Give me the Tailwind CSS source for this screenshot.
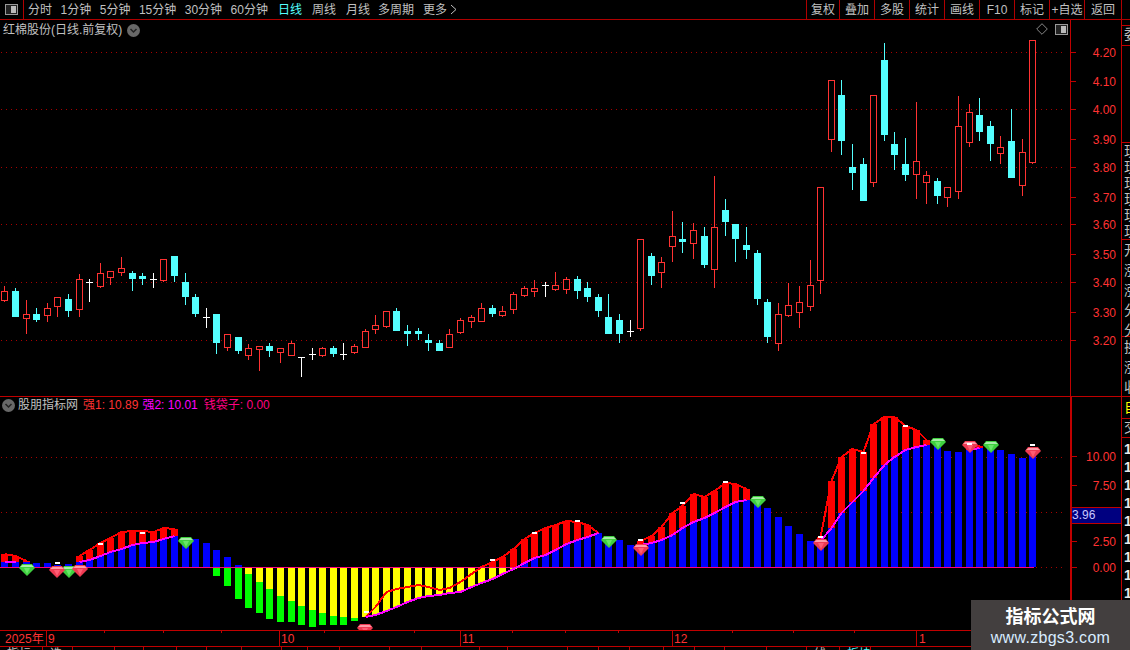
<!DOCTYPE html>
<html lang="en">
<head>
  <meta charset="UTF-8" />
  <title>红棉股份 K线</title>
  <script src="https://cdn.jsdelivr.net/npm/@tailwindcss/browser@4"></script>
</head>
<body class="relative w-[1130px] h-[650px] overflow-hidden bg-black text-[12px] leading-[14px] text-[#c0c0c0] font-['Liberation_Sans','Noto_Sans_CJK_SC',sans-serif]">

  <!-- Toolbar -->
  <header class="flex h-[20px] items-stretch border-b border-[#b00000]">
    <div class="flex w-[24px] items-center border-r border-[#b00000] pl-[5px]">
      <svg width="13" height="11" viewBox="0 0 13 11" shape-rendering="crispEdges">
        <rect x="0.5" y="0.5" width="12" height="10" rx="1" fill="#222" stroke="#999" />
        <rect x="6" y="2" width="5" height="7" fill="#bbb" />
      </svg>
    </div>
    <nav class="ml-[4px] flex items-center whitespace-nowrap">
      <div class="flex gap-[8.5px]">
        <span>分时</span><span>1分钟</span><span>5分钟</span><span>15分钟</span><span>30分钟</span><span>60分钟</span>
      </div>
      <div class="ml-[10px] flex gap-[10px]">
        <span class="text-[#54ffff]">日线</span><span>周线</span><span>月线</span>
      </div>
      <span class="ml-[8px]">多周期</span>
      <span class="ml-[9px]">更多</span>
      <svg class="ml-[3px]" width="7" height="11" viewBox="0 0 7 11"><path d="M1 1l5 4.5-5 4.5" fill="none" stroke="#c0c0c0" /></svg>
    </nav>
    <div class="ml-auto mr-[8px] flex text-center whitespace-nowrap">
      <span class="w-[33px] border-l border-[#b00000] pt-[3px]">复权</span>
      <span class="w-[35px] border-l border-[#b00000] pt-[3px]">叠加</span>
      <span class="w-[35px] border-l border-[#b00000] pt-[3px]">多股</span>
      <span class="w-[35px] border-l border-[#b00000] pt-[3px]">统计</span>
      <span class="w-[35px] border-l border-[#b00000] pt-[3px]">画线</span>
      <span class="w-[35px] border-l border-[#b00000] pt-[3px]">F10</span>
      <span class="w-[35px] border-l border-[#b00000] pt-[3px]">标记</span>
      <span class="w-[35px] border-l border-[#b00000] pt-[3px]">+自选</span>
      <span class="w-[38px] border-x border-[#b00000] pt-[3px]">返回</span>
    </div>
  </header>

  <!-- Price pane -->
  <section class="flex h-[377px] border-b border-[#c00000]">
    <div class="relative w-[1070px]">
      <svg id="price-chart" class="block" width="1070" height="376" viewBox="0 20 1070 376" shape-rendering="crispEdges"></svg>
      <div class="absolute left-[3px] top-[3px] flex items-center gap-[5px] whitespace-nowrap">
        <span>红棉股份(日线.前复权)</span>
        <svg width="13" height="13" viewBox="0 0 13 13"><circle cx="6.5" cy="6.5" r="6.5" fill="#686868" /><path d="M3.5 5l3 3 3-3" fill="none" stroke="#222" stroke-width="1.5" /></svg>
      </div>
      <svg class="absolute left-[1036px] top-[3px]" width="12" height="12" viewBox="0 0 12 12"><path d="M6 .7L11.3 6 6 11.3.7 6z" fill="none" stroke="#888" /></svg>
      <svg class="absolute left-[1055px] top-[4px]" width="13" height="11" viewBox="0 0 13 11" shape-rendering="crispEdges">
        <rect x="0.5" y="0.5" width="12" height="10" rx="1" fill="#222" stroke="#999" />
        <rect x="6" y="2" width="5" height="7" fill="#bbb" />
      </svg>
    </div>
    <div id="price-axis" class="relative w-[51px] border-l border-[#c00000] text-[#ff3232]"></div>
    <aside class="w-[9px] overflow-hidden border-l border-[#c00000]">
      <div class="h-[5px]"></div>
      <div class="h-[21px] w-[20px] border-y border-[#c00000] pl-[2px] pt-[1px] text-[14px]">委</div>
      <div class="h-[96px]"></div>
      <div class="h-[97px] w-[20px] border-t border-[#c00000] pl-[2px] text-[14px] leading-[16px]">现<br>现<br>现<br>现<br>现<br>现</div>
      <div class="h-[97px] w-[20px] border-t border-[#c00000] pl-[2px] text-[14px] leading-[20px]">开<br>涨<br>涨<br>分<br>分</div>
      <div class="w-[20px] border-t border-[#c00000] pl-[2px] text-[14px] leading-[20px]">换<br>涨<br>收</div>
    </aside>
  </section>

  <!-- Indicator pane -->
  <section class="flex h-[233px]">
    <div class="relative w-[1070px]">
      <svg id="indicator-chart" class="block" width="1070" height="233" viewBox="0 397 1070 233" shape-rendering="crispEdges"></svg>
      <div class="absolute left-[2px] top-[1px] flex items-center whitespace-nowrap">
        <svg width="13" height="13" viewBox="0 0 13 13"><circle cx="6.5" cy="6.5" r="6.5" fill="#686868" /><path d="M3.5 5l3 3 3-3" fill="none" stroke="#222" stroke-width="1.5" /></svg>
        <span class="ml-[3px]">股朋指标网</span>
        <span class="ml-[5px] text-[#ff3232]">强1: 10.89</span>
        <span class="ml-[4px] text-[#ff00ff]">强2: 10.01</span>
        <span class="ml-[6px] text-[#ff0080]">钱袋子: 0.00</span>
      </div>
    </div>
    <div id="indicator-axis" class="relative w-[51px] border-l-2 border-[#c00000] text-[#ff3232]"></div>
    <aside class="w-[9px] overflow-hidden border-l border-[#c00000]">
      <div class="h-[21px] w-[20px] pl-[2px] pt-[3px] text-[14px] text-[#ffff00]">自</div>
      <div class="h-[20px] w-[20px] border-y border-[#c00000] pl-[2px] pt-[1px] text-[14px]">交</div>
      <div class="w-[20px] pl-[2px] pt-[2px] text-[14px] leading-[18px] font-bold text-[#e8e8e8]">1<br>1<br>1<br>1<br>1<br>1<br>1<br>1<br>1<br>1</div>
    </aside>
  </section>

  <!-- Date axis -->
  <div class="relative h-[17px] border-y border-[#c00000] text-[#ff3232]">
    <span class="absolute left-[5px] top-[1px]">2025年</span>
    <i class="absolute left-[46px] top-0 h-[15px] w-px bg-[#c00000]"></i>
    <span class="absolute left-[48px] top-[1px]">9</span>
    <i class="absolute left-[279px] top-0 h-[15px] w-px bg-[#c00000]"></i>
    <span class="absolute left-[281px] top-[1px]">10</span>
    <i class="absolute left-[460px] top-0 h-[15px] w-px bg-[#c00000]"></i>
    <span class="absolute left-[462px] top-[1px]">11</span>
    <i class="absolute left-[672px] top-0 h-[15px] w-px bg-[#c00000]"></i>
    <span class="absolute left-[674px] top-[1px]">12</span>
    <i class="absolute left-[916px] top-0 h-[15px] w-px bg-[#c00000]"></i>
    <span class="absolute left-[919px] top-[1px]">1</span>
    <div id="date-ticks"></div>
  </div>

  <!-- Bottom tabs, cut off by the window -->
  <div id="tabs" class="flex h-[3px] overflow-hidden"></div>

  <!-- Watermark -->
  <div class="absolute left-[971px] top-[600px] flex h-[50px] w-[159px] flex-col items-center bg-[#433f3f]">
    <span class="mt-[6px] text-[18px] leading-[22px] font-bold text-white">指标公式网</span>
    <span class="mt-[1px] text-[16px] leading-[18px] tracking-[0.3px] text-[#d8ecff]">www.zbgs3.com</span>
  </div>

  <script>
    // [x, type, high, top, bottom, low] in page pixels
    const candles = [
      [4,'r',286,291,300,302],[15,'c',288,291,317,317],[26,'r',300,314,318,334],[36,'c',308,314,320,322],[47,'r',303,308,315,322],
      [57,'r',297,297,306,317],[68,'c',294,299,311,317],[79,'r',274,279,309,317],[89,'w',279,282,282,302],[100,'r',263,273,286,288],
      [110,'r',271,271,277,285],[121,'r',257,268,272,276],[132,'c',271,273,279,291],[142,'c',273,276,279,285],[153,'w',273,279,279,288],
      [163,'r',259,259,280,282],[174,'c',256,256,276,282],[185,'c',273,282,297,305],[195,'c',294,297,314,317],[206,'w',308,317,317,328],
      [216,'c',314,314,343,354],[227,'r',334,334,347,351],[238,'c',337,337,351,354],[248,'r',344,348,355,360],[259,'r',346,346,349,371],
      [269,'c',343,346,351,357],[280,'r',348,348,352,363],[291,'r',341,343,355,355],[301,'w',357,357,357,377],[312,'w',348,354,354,360],
      [322,'r',347,348,355,357],[333,'c',346,348,354,357],[343,'w',343,354,354,360],[354,'r',344,346,352,354],[365,'r',329,331,347,348],
      [375,'r',315,325,329,334],[386,'r',311,311,326,328],[396,'c',308,311,331,331],[407,'c',325,331,334,346],[418,'c',328,331,334,340],
      [428,'c',334,340,343,351],[439,'c',340,343,351,351],[449,'r',329,334,347,347],[460,'r',318,320,332,334],[471,'r',315,317,321,328],
      [481,'r',303,308,321,322],[492,'c',305,308,314,317],[502,'r',306,311,315,317],[513,'r',292,294,309,314],[524,'r',286,288,295,297],
      [534,'r',280,288,291,297],[545,'w',282,285,285,297],[555,'r',272,285,289,291],[566,'r',277,279,289,294],[577,'c',276,279,291,299],
      [587,'c',282,288,297,302],[598,'c',294,297,311,317],[608,'c',294,317,334,334],[619,'c',314,320,334,343],[630,'w',320,331,331,337],
      [640,'r',239,239,328,331],[651,'c',253,256,276,285],[661,'r',257,262,272,288],[672,'r',211,236,246,262],[682,'c',222,239,242,253],
      [693,'r',223,230,243,259],[704,'c',227,236,265,268],[714,'r',176,227,269,288],[725,'c',199,210,222,236],[735,'c',224,224,239,262],
      [746,'c',227,245,250,259],[757,'c',250,253,299,305],[767,'c',299,302,337,343],[778,'r',303,314,343,351],[788,'r',283,305,315,317],
      [799,'r',286,302,312,328],[810,'r',260,285,306,311],[820,'r',187,187,280,294],[831,'r',80,80,139,152],[841,'c',80,95,141,155],
      [852,'c',144,167,173,190],[863,'c',158,164,201,201],[873,'r',95,95,182,187],[884,'c',43,60,135,141],[894,'c',132,144,155,170],
      [905,'c',138,164,175,181],[916,'r',102,161,174,199],[926,'r',171,175,182,204],[937,'c',178,181,196,204],[947,'r',187,187,197,207],
      [958,'r',96,126,191,199],[969,'r',104,112,142,147],[979,'c',98,115,132,141],[990,'c',121,126,144,161],[1000,'r',136,147,153,164],
      [1011,'c',109,141,178,178],[1022,'r',139,152,185,196],[1032,'r',40,40,162,164]
    ];
    const xs = candles.map(c => c[0]);

    const dots = y => `<line x1="1" x2="1066" y1="${y + .5}" y2="${y + .5}" stroke="#a80000" stroke-dasharray="1 4" />`;

    let price = [52, 109, 167, 224, 282, 340].map(dots).join('');
    candles.forEach(([x, type, high, top, bottom, low]) => {
      const cx = x + .5;
      if (type === 'w') {
        price += `<line x1="${cx}" x2="${cx}" y1="${high}" y2="${low}" stroke="#fff" /><line x1="${x - 3}" x2="${x + 4}" y1="${top + .5}" y2="${top + .5}" stroke="#fff" />`;
      } else if (type === 'c') {
        price += `<line x1="${cx}" x2="${cx}" y1="${high}" y2="${low}" stroke="#54ffff" /><rect x="${x - 3}" y="${top}" width="7" height="${bottom - top}" fill="#54ffff" />`;
      } else {
        price += `<line x1="${cx}" x2="${cx}" y1="${high}" y2="${top}" stroke="#ff3232" /><line x1="${cx}" x2="${cx}" y1="${bottom}" y2="${low}" stroke="#ff3232" /><rect x="${cx - 3}" y="${top + .5}" width="6" height="${bottom - top}" fill="#000" stroke="#ff3232" />`;
      }
    });
    document.getElementById('price-chart').innerHTML = price;

    // Indicator series, index matches candles
    const blue = {};
    [562,562,562,563,563,565,564,562,560,556,552,549,545,543,542,539,536,539,539,543,550,557,565].forEach((v, i) => blue[i] = v);
    [563,558,555,550,544,540,537,533,540,540,545,545,543,540,535,528,522,518,513,507,502,500,498,508,517,526,534,541,541,528,513,502,491,478,465,457,450,447,445,445,451,452,450,448,447,450,454,458,452].forEach((v, i) => blue[i + 49] = v);
    const yellow = {};
    [574,582,589,596,601,606,610,613,616,617,618,617,615,611,607,602,598,596,595,593,592,587,583,579,574,569].forEach((v, i) => yellow[i + 23] = v);
    const green = {};
    [576,586,599,608,613,619,622,622,625,627,625,625,625,621].forEach((v, i) => green[i + 20] = v);
    const redSegments = [
      [0, [554,556,561]],
      [7, [556,550,543,538,532,531,531,532,528,529]],
      [34, [617,607,592,589,587,585,587,590,588,582,574,567,562,557,549,539,533,528,525,521,522,525,533]],
      [60, [541,536,527,513,506,494,497,491,483,484,489]],
      [77, [537,481,457,449,452,424,417,417,426,430,440]],
      [91, [445,446]]
    ];
    const magentaRanges = [[0,1],[7,16],[34,56],[60,70],[77,87],[91,92]];
    const level = i => blue[i] ?? yellow[i];

    let ind = [457, 512, 567].map(dots).join('');
    xs.forEach((x, i) => {
      if (blue[i]) ind += `<rect x="${x - 3}" y="${blue[i]}" width="7" height="${567 - blue[i]}" fill="#0000ff" />`;
      if (yellow[i]) ind += `<rect x="${x - 3}" y="568" width="7" height="${yellow[i] - 568}" fill="#ffff00" />`;
      if (green[i]) {
        const from = yellow[i] || 568;
        ind += `<rect x="${x - 3}" y="${from}" width="7" height="${green[i] - from}" fill="#00ff00" />`;
      }
    });
    redSegments.forEach(([start, values]) => {
      const pts = values.map((v, k) => `${xs[start + k] + .5},${v}`).join(' ');
      values.forEach((v, k) => {
        const bottom = Math.min(level(start + k) ?? 567, 567);
        if (bottom > v) ind += `<rect x="${xs[start + k] - 3}" y="${v}" width="7" height="${bottom - v}" fill="#ff0000" />`;
      });
      ind += `<polyline points="${pts}" fill="none" stroke="#ff0000" stroke-width="2" />`;
    });
    ind += `<line x1="0" x2="1034" y1="567.5" y2="567.5" stroke="#ff0080" />`;
    magentaRanges.forEach(([from, to]) => {
      const pts = [];
      for (let i = from; i <= to; i++) pts.push(`${xs[i] + .5},${level(i)}`);
      ind += `<polyline points="${pts.join(' ')}" fill="none" stroke="#ff00ff" stroke-width="2" />`;
    });

    const diamond = (x, y, base, light, bright) => `<g transform="translate(${x} ${y})" shape-rendering="auto">
      <polygon points="-8,-2 -5,-6 5,-6 8,-2 0,6" fill="${base}" />
      <polygon points="-7,-3 -4.5,-5 4.5,-5 7,-3" fill="${light}" />
      <polygon points="-3,-2 3,-2 0,4" fill="${bright}" />
    </g>`;
    [[27,570],[69,572],[186,543],[609,542],[758,502],[938,444],[991,447]].forEach(([x, y]) => {
      ind += diamond(x, y, '#3fcf3f', '#a8eca8', '#66e866');
    });
    [[57,572],[80,571],[365,630],[641,550],[821,545],[970,447],[1033,453]].forEach(([x, y]) => {
      ind += diamond(x, y, '#ee3a52', '#ff9aa8', '#ff5c74');
    });

    // small tags on the lines, drawn above the diamonds
    [[57,562],[100,543],[142,532],[366,611],[492,559],[534,532],[577,520],[640,539],[682,502],[725,481],[820,536],[863,452],[905,425],[969,443],[1032,444]].forEach(([x, y]) => {
      ind += `<rect x="${x - 2}" y="${y}" width="5" height="2" fill="#fff" />`;
    });
    document.getElementById('indicator-chart').innerHTML = ind;

    // Axis labels, top is relative to each pane's own top edge
    const priceAxis = document.getElementById('price-axis');
    [['4.20',52],['4.10',81],['4.00',109],['3.90',139],['3.80',167],['3.70',197],['3.60',224],['3.50',254],['3.40',282],['3.30',312],['3.20',340]].forEach(([label, y]) => {
      priceAxis.innerHTML += `<i class="absolute left-0 h-px w-[5px] bg-[#c00000]" style="top:${y - 20}px"></i><span class="absolute right-[5px]" style="top:${y - 26}px">${label}</span>`;
    });
    const indicatorAxis = document.getElementById('indicator-axis');
    [['10.00',456],['7.50',485],['2.50',541],['0.00',567]].forEach(([label, y]) => {
      indicatorAxis.innerHTML += `<i class="absolute left-0 h-px w-[5px] bg-[#c00000]" style="top:${y - 397}px"></i><span class="absolute right-[5px]" style="top:${y - 403}px">${label}</span>`;
    });
    indicatorAxis.innerHTML += `<div class="absolute left-0 right-0 top-[110px] h-[17px] border-y border-[#c00000] bg-[#000080] text-[#c8c8ff]">3.96</div>`;

    const ticks = document.getElementById('date-ticks');
    [104,163,221,324,414,512,565,618,732,793,854].forEach(x => {
      ticks.innerHTML += `<i class="absolute top-0 h-[2px] w-px bg-[#c00000]" style="left:${x}px"></i>`;
    });

    // only a few tab labels show above the window edge
    const tabs = document.getElementById('tabs');
    const edges = [43,73,115,144,177,207,242,282,308,340,390,422,480,508,568,599,630,664,695,725,767,807,840,871];
    const labels = { 0: '指标', 1: '选', 22: '线', 23: '板块' };
    edges.forEach((x, i) => {
      const w = x - (i ? edges[i - 1] : 0);
      const color = i === 23 ? 'text-[#54ffff]' : 'text-[#c0c0c0]';
      tabs.innerHTML += `<span class="overflow-hidden border-r border-[#c00000] pl-[7px] whitespace-nowrap ${color}" style="width:${w}px">${labels[i] || ''}</span>`;
    });
  </script>
</body>
</html>
